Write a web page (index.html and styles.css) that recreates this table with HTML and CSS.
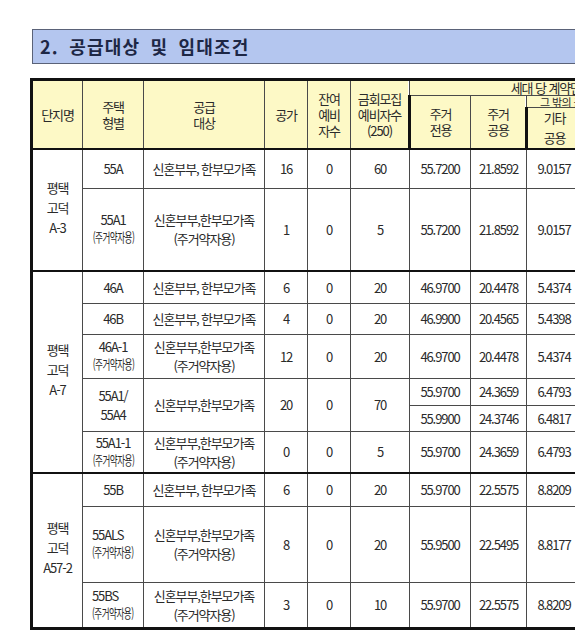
FILE: index.html
```html
<!DOCTYPE html>
<html lang="ko">
<head>
<meta charset="utf-8">
<link rel="stylesheet" href="styles.css">
</head>
<body>
<div class="page">
  <div class="title">2. 공급대상 및 임대조건</div>
  <table class="grid">
    <colgroup>
      <col class="c1"><col class="c2"><col class="c3"><col class="c4"><col class="c5"><col class="c6"><col class="c7"><col class="c8"><col class="c9"><col class="c10"><col class="c11">
    </colgroup>
    <thead>
      <tr class="hA">
        <th rowspan="3">단지명</th>
        <th rowspan="3">주택<br>형별</th>
        <th rowspan="3">공급<br>대상</th>
        <th rowspan="3">공가</th>
        <th rowspan="3">잔여<br>예비<br>자수</th>
        <th rowspan="3">금회모집<br>예비자수<br>(250)</th>
        <th colspan="5" class="span-head">세대 당 계약면적(㎡)</th>
      </tr>
      <tr class="hB">
        <th rowspan="2">주거<br>전용</th>
        <th rowspan="2">주거<br>공용</th>
        <th colspan="2" class="small-head">그 밖의 공용면적</th>
        <th rowspan="2">계</th>
      </tr>
      <tr class="hC">
        <th class="top">기타<br>공용</th>
        <th class="top">지하<br>주차장</th>
      </tr>
    </thead>
    <tbody>
      <tr class="r1 gstart">
        <td rowspan="2" class="site">평택<br>고덕<br>A-3</td>
        <td>55A</td><td>신혼부부, 한부모가족</td><td>16</td><td>0</td><td>60</td><td>55.7200</td><td>21.8592</td><td>9.0157</td><td>38.1</td><td>124.7</td>
      </tr>
      <tr class="r2">
        <td>55A1<br><span class="tiny">(주거약자용)</span></td><td>신혼부부,한부모가족<br>(주거약자용)</td><td>1</td><td>0</td><td>5</td><td>55.7200</td><td>21.8592</td><td>9.0157</td><td>38.1</td><td>124.7</td>
      </tr>
      <tr class="r3 gstart">
        <td rowspan="6" class="site">평택<br>고덕<br>A-7</td>
        <td>46A</td><td>신혼부부, 한부모가족</td><td>6</td><td>0</td><td>20</td><td>46.9700</td><td>20.4478</td><td>5.4374</td><td>31.2</td><td>104.0</td>
      </tr>
      <tr class="r4">
        <td>46B</td><td>신혼부부, 한부모가족</td><td>4</td><td>0</td><td>20</td><td>46.9900</td><td>20.4565</td><td>5.4398</td><td>31.2</td><td>104.0</td>
      </tr>
      <tr class="r5">
        <td>46A-1<br><span class="tiny">(주거약자용)</span></td><td>신혼부부,한부모가족<br>(주거약자용)</td><td>12</td><td>0</td><td>20</td><td>46.9700</td><td>20.4478</td><td>5.4374</td><td>31.2</td><td>104.0</td>
      </tr>
      <tr class="r6a">
        <td rowspan="2">55A1/<br>55A4</td><td rowspan="2">신혼부부,한부모가족</td><td rowspan="2">20</td><td rowspan="2">0</td><td rowspan="2">70</td><td>55.9700</td><td>24.3659</td><td>6.4793</td><td>37.2</td><td>124.0</td>
      </tr>
      <tr class="r6b">
        <td>55.9900</td><td>24.3746</td><td>6.4817</td><td>37.2</td><td>124.0</td>
      </tr>
      <tr class="r7">
        <td>55A1-1<br><span class="tiny">(주거약자용)</span></td><td>신혼부부,한부모가족<br>(주거약자용)</td><td>0</td><td>0</td><td>5</td><td>55.9700</td><td>24.3659</td><td>6.4793</td><td>37.2</td><td>124.0</td>
      </tr>
      <tr class="r8 gstart">
        <td rowspan="3" class="site">평택<br>고덕<br>A57-2</td>
        <td>55B</td><td>신혼부부, 한부모가족</td><td>6</td><td>0</td><td>20</td><td>55.9700</td><td>22.5575</td><td>8.8209</td><td>37.6</td><td>125.0</td>
      </tr>
      <tr class="r9">
        <td class="left">55ALS<br><span class="tiny">(주거약자용)</span></td><td>신혼부부,한부모가족<br>(주거약자용)</td><td>8</td><td>0</td><td>20</td><td>55.9500</td><td>22.5495</td><td>8.8177</td><td>37.6</td><td>125.0</td>
      </tr>
      <tr class="r10">
        <td class="left">55BS<br><span class="tiny">(주거약자용)</span></td><td>신혼부부,한부모가족<br>(주거약자용)</td><td>3</td><td>0</td><td>10</td><td>55.9700</td><td>22.5575</td><td>8.8209</td><td>37.6</td><td>125.0</td>
      </tr>
    </tbody>
  </table>
</div>
</body>
</html>
```

FILE: styles.css
```css
html, body {
  margin: 0;
  padding: 0;
  background: #ffffff;
  overflow: hidden;
}

.page {
  width: 575px;
  height: 644px;
  overflow: hidden;
  padding: 29px 0 0 30px;
  box-sizing: border-box;
  font-family: "Noto Sans CJK KR", "Noto Sans", sans-serif;
  color: #2a2a2a;
}

.title {
  width: 600px;
  height: 35px;
  box-sizing: border-box;
  margin-left: 2px;
  background: #b4c6ef;
  border: 1px solid #5a6278;
  border-right: none;
  padding: 0 0 0 7px;
  font-size: 18px;
  font-weight: 700;
  line-height: 33px;
  color: #1d2745;
  letter-spacing: 1.2px;
  word-spacing: 4px;
}

.grid {
  margin-top: 14px;
  border-collapse: collapse;
  table-layout: fixed;
  width: 680px;
  font-size: 13px;
  letter-spacing: -1.1px;
}

.c1 { width: 51px; }
.c2 { width: 61px; }
.c3 { width: 121px; }
.c4 { width: 43px; }
.c5 { width: 43px; }
.c6 { width: 59px; }
.c7 { width: 61px; }
.c8 { width: 56px; }
.c9 { width: 55px; }
.c10 { width: 61px; }
.c11 { width: 69px; }

.grid th,
.grid td {
  border: 1px solid #4a4a4a;
  padding: 0;
  text-align: center;
  vertical-align: middle;
  font-weight: 400;
  line-height: 19px;
  overflow: hidden;
  white-space: nowrap;
}

.grid th {
  background: #fdf9c6;
  line-height: 16px;
}

.grid thead tr:first-child th {
  border-top: 3px solid #111;
}

.grid th:first-child,
.grid td.site {
  border-left: 3px solid #111;
}

.grid .hC th {
  border-bottom: 2px solid #111;
}
.grid .hA th[rowspan="3"] {
  border-bottom: 2px solid #111;
}
.grid .hB th[rowspan="2"] {
  border-bottom: 2px solid #111;
}

.hA { height: 16px; }
.hB { height: 12px; }
.hC { height: 41px; }

.grid .span-head {
  line-height: 14px;
  height: 14px;
  vertical-align: top;
}

.grid .small-head {
  line-height: 10px;
  height: 11px;
  font-size: 11px;
  letter-spacing: -0.6px;
  text-align: left;
  padding-left: 13px;
  vertical-align: middle;
}

.grid .hC th.top {
  vertical-align: top;
  line-height: 20px;
}

.grid .gstart td {
  border-top: 2px solid #111;
}

.grid tbody tr:last-child td,
.grid td.site[rowspan="3"] {
  border-bottom: 3px solid #111;
}

.site {
  line-height: 20px !important;
  padding-bottom: 4px !important;
}

.tiny {
  display: inline-block;
  font-size: 13px;
  line-height: 15px;
  letter-spacing: -0.8px;
  transform: scaleX(0.66);
  transform-origin: center;
  vertical-align: top;
  margin: 0 -12px;
}

.grid td.left {
  text-align: left;
  padding-left: 9px;
}

.grid td.left .tiny {
  transform-origin: left center;
  margin: 0 -24px 0 0;
}

.r1 { height: 39px; }
.r2 { height: 83px; }
.r3 { height: 32px; }
.r4 { height: 31px; }
.r5 { height: 44px; }
.r6a { height: 27px; }
.r6b { height: 26px; }
.r7 { height: 42px; }
.r8 { height: 33px; }
.r9 { height: 76px; }
.r10 { height: 46px; }
```
